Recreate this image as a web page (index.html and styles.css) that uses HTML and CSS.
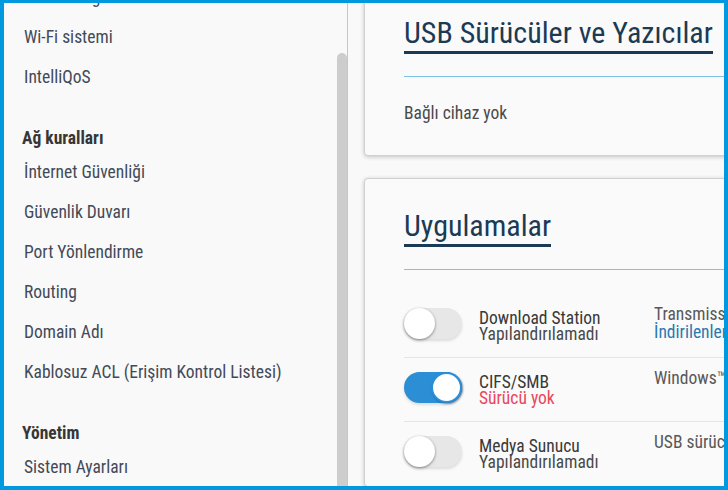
FILE: index.html
```html
<!DOCTYPE html>
<html>
<head>
    <meta charset="UTF-8">
    <title>Uygulamalar</title>
    <link rel="stylesheet" href="styles.css">
</head>
<body>
    <div class="frame">
        <aside class="sidebar">
            <nav class="menu">
                <a class="menu-item">Misafir segmenti</a>
                <a class="menu-item">Wi-Fi sistemi</a>
                <a class="menu-item">IntelliQoS</a>

                <div class="menu-title">Ağ kuralları</div>
                <a class="menu-item">İnternet Güvenliği</a>
                <a class="menu-item">Güvenlik Duvarı</a>
                <a class="menu-item">Port Yönlendirme</a>
                <a class="menu-item">Routing</a>
                <a class="menu-item">Domain Adı</a>
                <a class="menu-item">Kablosuz ACL (Erişim Kontrol Listesi)</a>

                <div class="menu-title">Yönetim</div>
                <a class="menu-item">Sistem Ayarları</a>
                <a class="menu-item">Güncelleme</a>
            </nav>
            <div class="scrollbar"><div class="thumb"></div></div>
        </aside>

        <main class="content">
            <section class="card">
                <div class="card-head">
                    <h2 class="card-title">USB Sürücüler ve Yazıcılar</h2>
                </div>
                <p class="empty">Bağlı cihaz yok</p>
            </section>

            <section class="card">
                <div class="card-head">
                    <h2 class="card-title">Uygulamalar</h2>
                </div>
                <div class="apps">
                    <div class="app-row">
                        <div class="toggle"><span class="knob"></span></div>
                        <div class="app-name">
                            <div>Download Station</div>
                            <div class="status">Yapılandırılamadı</div>
                        </div>
                        <div class="app-desc">
                            <div>Transmission BitTorrent istemcisi</div>
                            <a class="link">İndirilenler</a>
                        </div>
                    </div>
                    <div class="app-row">
                        <div class="toggle on"><span class="knob"></span></div>
                        <div class="app-name">
                            <div>CIFS/SMB</div>
                            <div class="status error">Sürücü yok</div>
                        </div>
                        <div class="app-desc">
                            <div>Windows™ ağ paylaşımı</div>
                        </div>
                    </div>
                    <div class="app-row">
                        <div class="toggle"><span class="knob"></span></div>
                        <div class="app-name">
                            <div>Medya Sunucu</div>
                            <div class="status">Yapılandırılamadı</div>
                        </div>
                        <div class="app-desc">
                            <div>USB sürücüdeki medya dosyaları</div>
                        </div>
                    </div>
                </div>
            </section>
        </main>
    </div>
</body>
</html>
```

FILE: styles.css
```css
:root {
    --frame: #0099e0;
    --bg: #f9f9f9;
    --text: #434a57;
    --navy: #1b3a55;
    --sky: #7cc3ea;
    --row-line: #d7e9f5;
    --toggle-on: #2c8fd6;
    --red: #e8485a;
}

* {
    box-sizing: border-box;
}

html, body {
    margin: 0;
    height: 100%;
}

body {
    font-family: "Roboto Condensed", Roboto, sans-serif;
    font-stretch: condensed;
    font-size: 17.5px;
    color: var(--text);
    background-color: var(--bg);
}

.frame {
    display: flex;
    height: 490px;
    border: 4px solid var(--frame);
    border-top-width: 3px;
    overflow: hidden;
}

/* left menu */
.sidebar {
    display: flex;
    width: 344px;
    flex-shrink: 0;
    border-right: 1px solid #c6c6c6;
    background-color: var(--bg);
    overflow: hidden;
}

.menu {
    flex: 1;
    display: flex;
    flex-direction: column;
    margin-top: -26px;
    padding-left: 20px;
}

.menu-item {
    display: block;
    line-height: 40px;
    color: var(--text);
    text-decoration: none;
    white-space: nowrap;
}

.menu-title {
    margin-top: 28px;
    margin-left: -2px;
    line-height: 27px;
    font-weight: bold;
    color: #363636;
}

.scrollbar {
    width: 10px;
    flex-shrink: 0;
}

.thumb {
    margin-top: 50px;
    height: 600px;
    background-color: #cdcdcd;
    border-radius: 5px 5px 0 0;
}

/* right content */
.content {
    flex: 1;
    overflow: hidden;
    padding-left: 16px;
}

.card {
    width: 600px;
    margin-bottom: 22px;
    padding: 29px 0 0 39px;
    background-color: #fafafa;
    border: 1px solid #d0d0d0;
    border-radius: 4px;
    box-shadow: 0 1px 4px rgba(0, 0, 0, 0.22);
}

.card:first-child {
    margin-top: -18px;
}

.card-head {
    padding-bottom: 22px;
    border-bottom: 1px solid var(--sky);
}

.card-title {
    display: inline-block;
    margin: 0;
    font-size: 30px;
    font-weight: normal;
    line-height: 36px;
    color: var(--navy);
    border-bottom: 3px solid var(--navy);
}

.empty {
    margin: 0;
    padding: 24px 0 30px;
    line-height: 24px;
    color: #4a4a4a;
}

.apps {
    padding-top: 24px;
}

.app-row {
    display: flex;
    height: 64px;
    border-bottom: 1px solid var(--row-line);
}

.app-row:last-child {
    border-bottom: none;
}

.toggle {
    position: relative;
    width: 58px;
    height: 31px;
    margin-top: 14px;
    margin-right: 17px;
    flex-shrink: 0;
    border-radius: 16px;
    background-color: #e7e7e7;
    box-shadow: 0 2px 3px rgba(0, 0, 0, 0.12);
}

.knob {
    position: absolute;
    top: 0;
    left: 0;
    width: 31px;
    height: 31px;
    border-radius: 50%;
    background-color: #fff;
    box-shadow: 0 1px 3px rgba(0, 0, 0, 0.45);
}

.toggle.on {
    background-color: var(--toggle-on);
}

.toggle.on .knob {
    left: 27px;
    border: 2px solid var(--toggle-on);
    box-shadow: 1px 1px 2px rgba(0, 40, 80, 0.5);
}

.app-name {
    width: 175px;
    flex-shrink: 0;
    padding-top: 16px;
    line-height: 16px;
    color: #383838;
}

.status {
    color: #4a4a4a;
}

.status.error {
    color: var(--red);
}

.app-desc {
    padding-top: 11px;
    line-height: 18px;
    color: #585858;
    white-space: nowrap;
}

.link {
    color: #2a78b0;
}
```
